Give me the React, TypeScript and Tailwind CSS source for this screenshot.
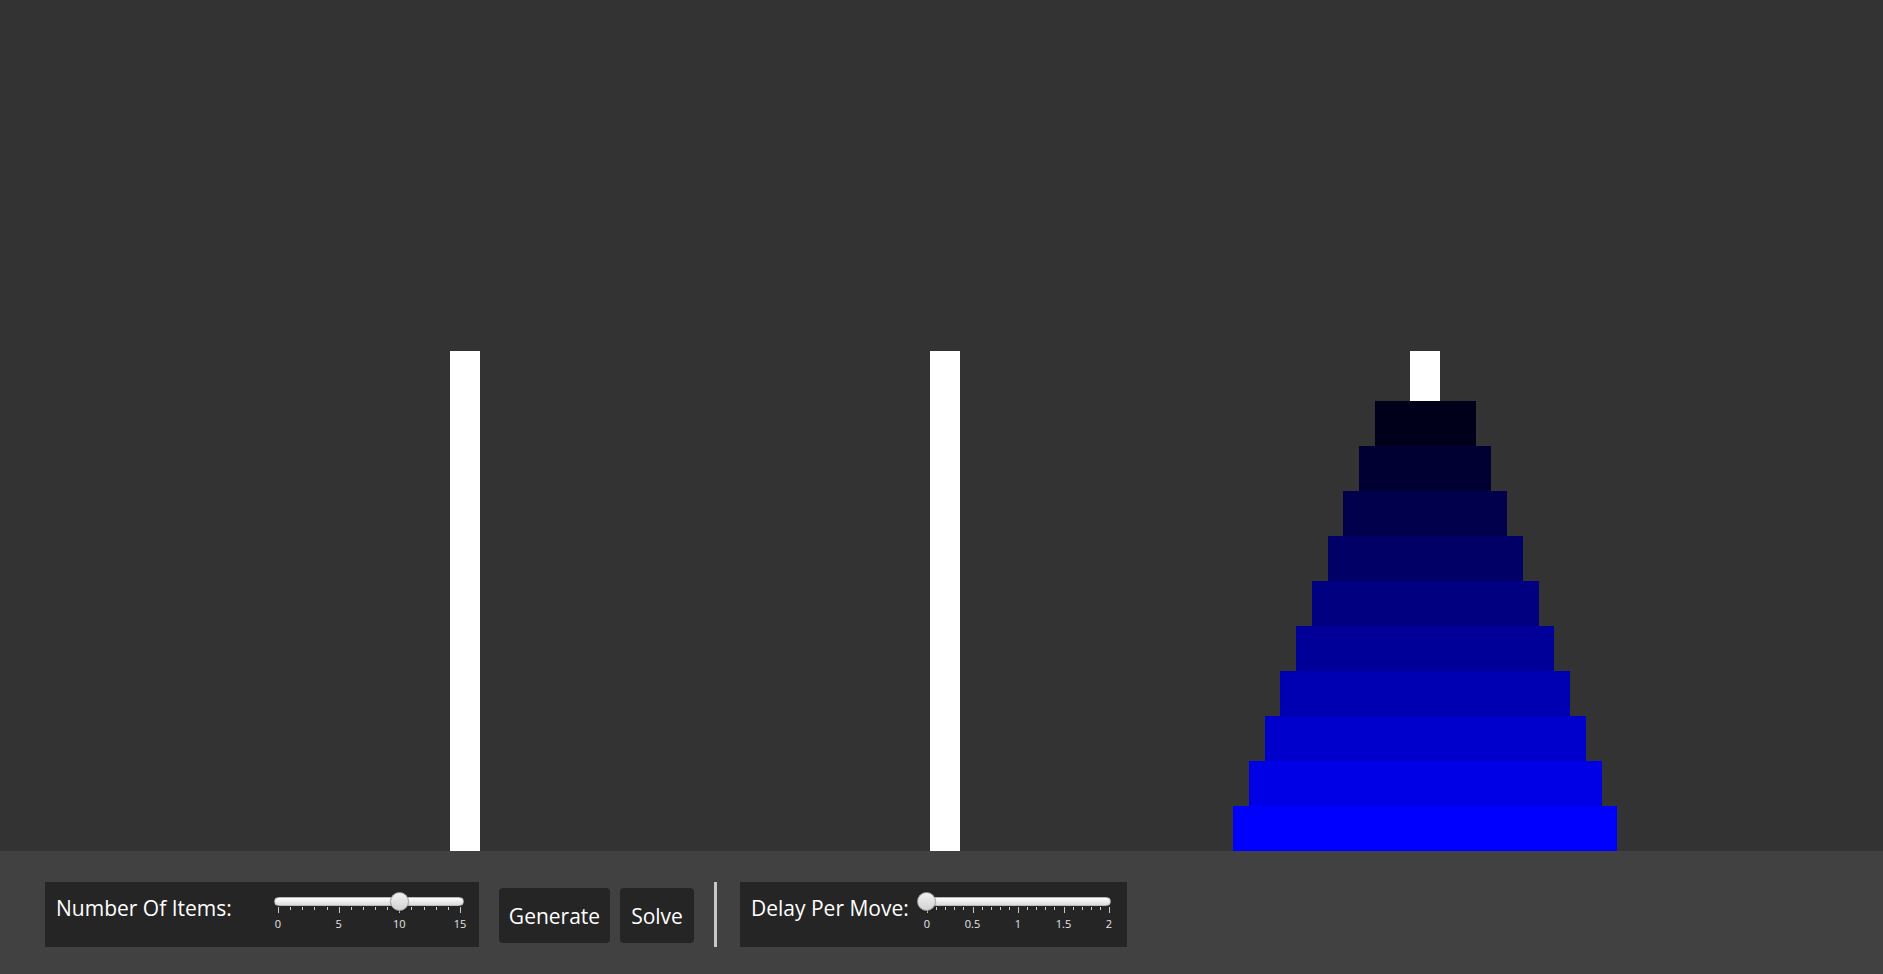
import React from "react";

type Major = { v: number; label: string };
type SliderProps = {
  width: number;
  tickStart: number;
  tickEnd: number;
  min: number;
  max: number;
  step: number;
  majors: Major[];
  value: number;
  thumbOffset?: number;
};

function Slider({ width, tickStart, tickEnd, min, max, step, majors, value, thumbOffset = 0 }: SliderProps) {
  const n = Math.round((max - min) / step);
  const pos = (v: number) => tickStart + ((tickEnd - tickStart) * (v - min)) / (max - min);
  const isMajor = (v: number) => majors.some((m) => Math.abs(m.v - v) < 1e-6);
  const ticks = Array.from({ length: n + 1 }, (_, i) => min + i * step);
  return (
    <div className="relative h-[65px] shrink-0" style={{ width }}>
      <div className="absolute left-0 right-0 top-[15px] h-[9px] rounded-full border border-[#b8b8b8] bg-linear-to-b from-[#ffffff] to-[#dcdcdc]" />
      <svg className="absolute left-0 top-[25px]" width={width} height={7}>
        {ticks.map((v, i) => {
          const x = Math.round(pos(v)) + 0.5;
          const major = isMajor(v);
          return <line key={i} x1={x} x2={x} y1={0} y2={major ? 6 : 3} stroke="#c9c9c9" strokeWidth={1} />;
        })}
      </svg>
      {majors.map((m) => (
        <div
          key={m.label}
          className="absolute top-[35px] w-[30px] -ml-[15px] text-center text-[11px] leading-[14px] text-[#e6e6e6]"
          style={{ left: pos(m.v) }}
        >
          {m.label}
        </div>
      ))}
      <div
        className="absolute top-[10px] w-[19px] h-[19px] -ml-[9.5px] rounded-full border border-[#a3a3a3] bg-linear-to-b from-[#f2f2f2] to-[#d2d2d2] shadow-[0_1px_1px_rgba(0,0,0,0.3)]"
        style={{ left: pos(value) + thumbOffset }}
      />
    </div>
  );
}

function Tower({ disks }: { disks: number }) {
  return (
    <div className="grid w-[480px] h-full">
      <div className="col-start-1 row-start-1 self-end justify-self-center w-[30px] h-[500px] bg-white" />
      <div className="col-start-1 row-start-1 self-end justify-self-center flex flex-col items-center">
        {Array.from({ length: disks }, (_, i) => (
          <div
            key={i}
            className="h-[45px]"
            style={{
              width: Math.round(101 + 31.44 * i),
              backgroundColor: `rgb(0,0,${Math.round((255 * (i + 1)) / 10)})`,
            }}
          />
        ))}
      </div>
    </div>
  );
}

export default function App() {
  const font = { fontFamily: '"Open Sans", "Noto Sans", sans-serif' };
  return (
    <div className="w-[1883px] h-[974px] flex flex-col bg-[#333333] overflow-hidden" style={font}>
      <div className="h-[851px] flex pl-[225px]">
        <Tower disks={0} />
        <Tower disks={0} />
        <Tower disks={10} />
      </div>
      <div className="h-[123px] bg-[#414141] flex items-start pt-[31px] pl-[45px] text-white">
        <div className="h-[65px] w-[434px] bg-[#252525] flex items-start pl-[11px]">
          <div className="w-[218px] pt-[12px] text-[21px] leading-[28px] whitespace-nowrap">Number Of Items:</div>
          <Slider
            width={190}
            tickStart={4}
            tickEnd={186}
            min={0}
            max={15}
            step={1}
            value={10}
            majors={[
              { v: 0, label: "0" },
              { v: 5, label: "5" },
              { v: 10, label: "10" },
              { v: 15, label: "15" },
            ]}
          />
        </div>
        <button className="ml-[20px] mt-[6px] h-[55px] w-[111px] rounded-[4px] bg-[#252525] text-[21px] leading-[28px] text-white">
          Generate
        </button>
        <button className="ml-[10px] mt-[6px] h-[55px] w-[74px] rounded-[4px] bg-[#252525] text-[21px] leading-[28px] text-white">
          Solve
        </button>
        <div className="ml-[20px] w-[3px] h-[65px] bg-[#c8c8c8]" />
        <div className="ml-[23px] h-[65px] w-[387px] bg-[#252525] flex items-start pl-[11px]">
          <div className="w-[167px] pt-[12px] text-[21px] leading-[28px] whitespace-nowrap">Delay Per Move:</div>
          <Slider
            width={193}
            tickStart={9}
            tickEnd={191}
            min={0}
            max={2}
            step={0.1}
            value={0}
            thumbOffset={-1}
            majors={[
              { v: 0, label: "0" },
              { v: 0.5, label: "0.5" },
              { v: 1, label: "1" },
              { v: 1.5, label: "1.5" },
              { v: 2, label: "2" },
            ]}
          />
        </div>
      </div>
    </div>
  );
}
